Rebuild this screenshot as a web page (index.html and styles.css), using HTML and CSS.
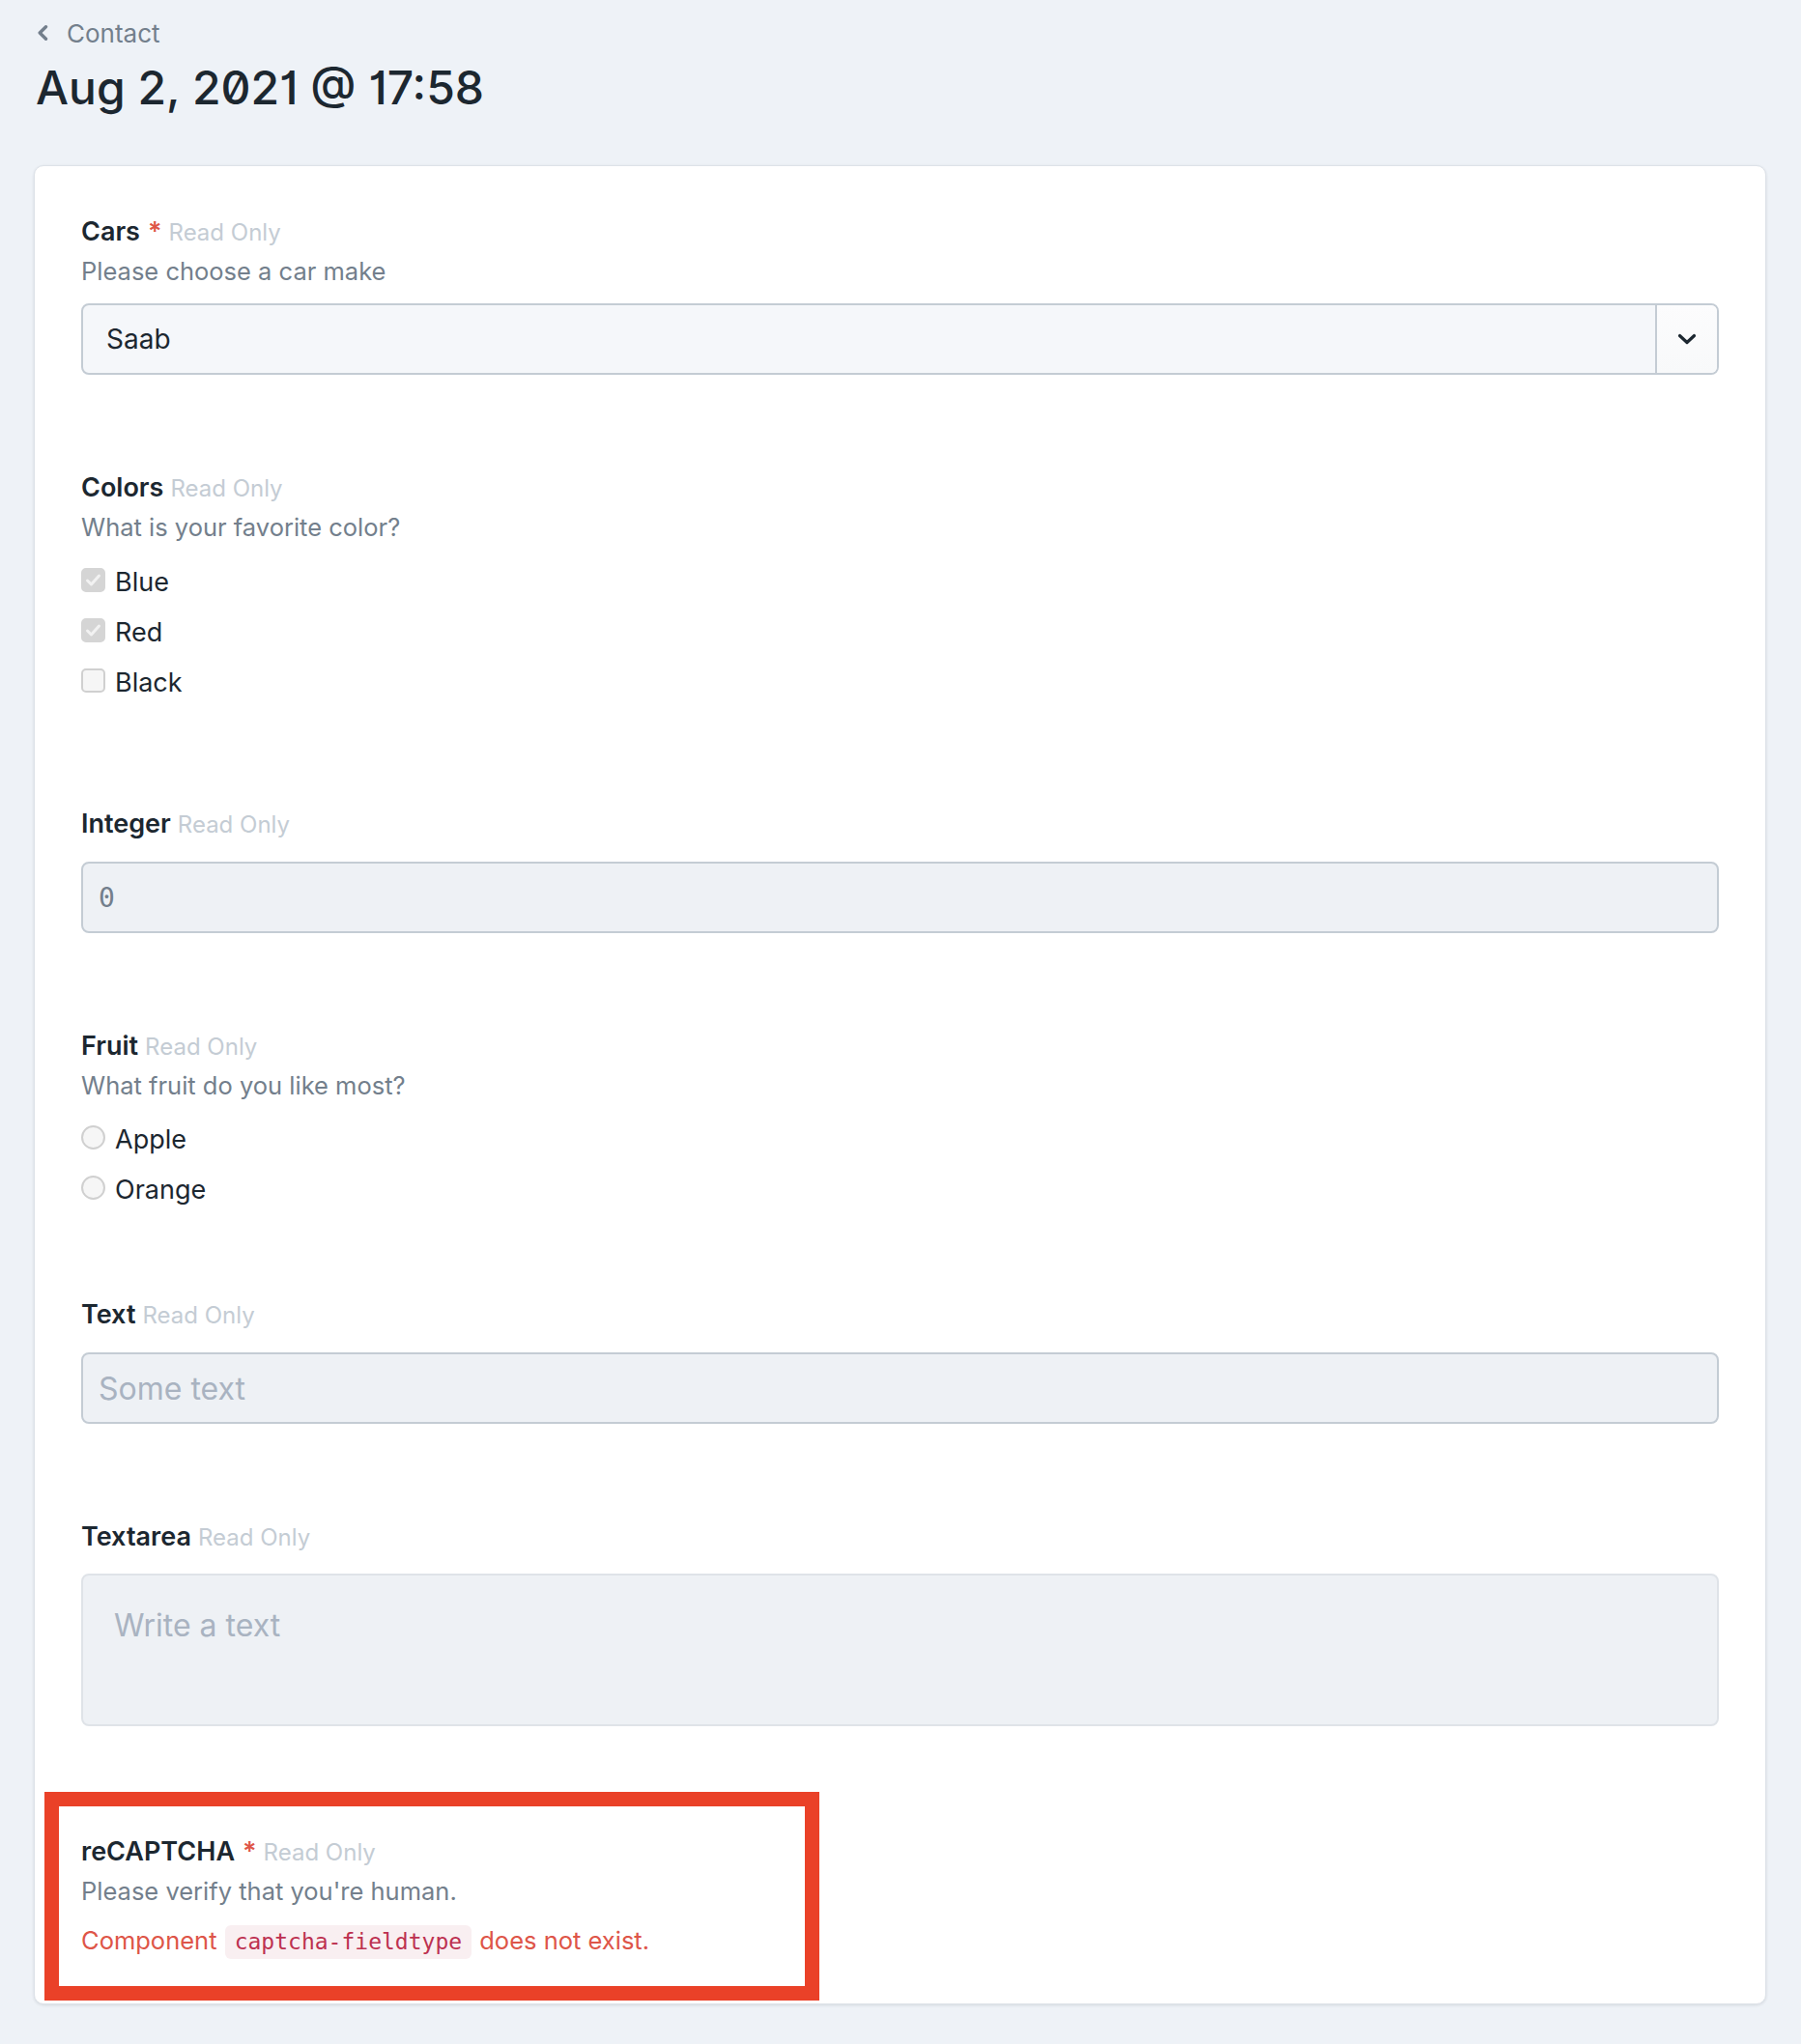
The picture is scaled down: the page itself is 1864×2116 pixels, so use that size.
FILE: index.html
```html
<!DOCTYPE html>
<html lang="en">
<head>
<meta charset="utf-8">
<title>Aug 2, 2021 @ 17:58</title>
<link rel="stylesheet" href="styles.css">
</head>
<body>
<div class="page">
  <a class="crumb" href="#">
    <svg class="crumb-icon" viewBox="0 0 12 16" aria-hidden="true"><path d="M9.5 1.8 L3.2 8 L9.5 14.2"/></svg>
    <span>Contact</span>
  </a>
  <h1 class="title">Aug 2, 2021 @ 17:58</h1>

  <div class="card">
    <div class="field">
      <div class="label">Cars<span class="req">*</span><span class="ro">Read Only</span></div>
      <div class="desc">Please choose a car make</div>
      <div class="select">
        <div class="select-value">Saab</div>
        <div class="select-btn">
          <svg class="select-icon" viewBox="0 0 20 12" aria-hidden="true"><path d="M2.5 2.5 L10 9.5 L17.5 2.5"/></svg>
        </div>
      </div>
    </div>

    <div class="field">
      <div class="label">Colors<span class="ro">Read Only</span></div>
      <div class="desc">What is your favorite color?</div>
      <div class="options checks">
        <div class="option"><span class="cb checked"><svg viewBox="0 0 25 25"><path d="M6.5 13 L10.5 17 L18.5 8"/></svg></span><span>Blue</span></div>
        <div class="option"><span class="cb checked"><svg viewBox="0 0 25 25"><path d="M6.5 13 L10.5 17 L18.5 8"/></svg></span><span>Red</span></div>
        <div class="option"><span class="cb"></span><span>Black</span></div>
      </div>
    </div>

    <div class="field">
      <div class="label">Integer<span class="ro">Read Only</span></div>
      <div class="input"><span class="mono-value">0</span></div>
    </div>

    <div class="field">
      <div class="label">Fruit<span class="ro">Read Only</span></div>
      <div class="desc">What fruit do you like most?</div>
      <div class="options radios">
        <div class="option"><span class="rd"></span><span>Apple</span></div>
        <div class="option"><span class="rd"></span><span>Orange</span></div>
      </div>
    </div>

    <div class="field">
      <div class="label">Text<span class="ro">Read Only</span></div>
      <div class="input"><span class="placeholder">Some text</span></div>
    </div>

    <div class="field">
      <div class="label">Textarea<span class="ro">Read Only</span></div>
      <div class="textarea">Write a text</div>
    </div>

    <div class="field last">
      <div class="label">reCAPTCHA<span class="req">*</span><span class="ro">Read Only</span></div>
      <div class="desc">Please verify that you're human.</div>
      <div class="error">Component <code class="code">captcha-fieldtype</code> does not exist.</div>
      <div class="highlight"></div>
    </div>
  </div>
</div>
</body>
</html>
```

FILE: styles.css
```css
* {
  box-sizing: border-box;
}

html,
body {
  margin: 0;
  background: #eef2f7;
}

body {
  font-family: Inter, "Noto Sans", "Liberation Sans", sans-serif;
  color: #1c2730;
}

.page {
  padding: 14px 36px 40px 35px;
}

.crumb {
  display: flex;
  align-items: center;
  height: 40px;
  font-size: 26px;
  color: #737f8c;
  text-decoration: none;
}

.crumb-icon {
  width: 12px;
  height: 16px;
  margin-left: 3px;
  margin-right: 19px;
  fill: none;
  stroke: #737f8c;
  stroke-width: 3.4;
  stroke-linecap: round;
  stroke-linejoin: round;
}

.title {
  margin: 5px 0 0 2px;
  font-size: 48px;
  line-height: 64px;
  font-weight: 500;
  color: #1c2730;
  font-feature-settings: "zero" 1, "cv01" 1;
}

.card {
  margin-top: 48px;
  background: #fff;
  border: 1px solid #dde2e8;
  border-radius: 10px;
  box-shadow: 0 1px 3px rgba(30, 45, 60, 0.12);
}

.field {
  position: relative;
  padding: 48px 48px 49px;
}

.field.last {
  padding-bottom: 45px;
}

.label {
  font-size: 27px;
  line-height: 40px;
  font-weight: 600;
  color: #1c2730;
}

.req {
  color: #de5548;
  margin-left: 8px;
}

.ro {
  margin-left: 7px;
  font-size: 24px;
  font-weight: 400;
  color: #c4ccd4;
}

.desc {
  font-size: 25.5px;
  line-height: 40px;
  color: #737f8c;
}

.select {
  display: flex;
  margin-top: 13px;
  height: 74px;
  border: 2px solid #c4ccd4;
  border-radius: 8px;
  background: #f5f7fa;
  overflow: hidden;
}

.select-value {
  flex: 1;
  display: flex;
  align-items: center;
  padding-left: 24px;
  font-size: 28px;
  color: #1c2730;
}

.select-btn {
  width: 64px;
  display: flex;
  align-items: center;
  justify-content: center;
  border-left: 2px solid #c4ccd4;
  background: linear-gradient(#fcfcfd, #f8f9fa);
}

.select-icon {
  width: 20px;
  height: 12px;
  fill: none;
  stroke: #1c2730;
  stroke-width: 3.2;
  stroke-linecap: round;
  stroke-linejoin: round;
}

.options {
  display: flex;
  flex-direction: column;
  gap: 12px;
}

.options.checks {
  margin-top: 16px;
  margin-bottom: 10px;
}

.options.radios {
  margin-top: 15px;
  margin-bottom: -7px;
}

.option {
  display: flex;
  align-items: center;
  gap: 10px;
  height: 40px;
  font-size: 27px;
  color: #1c2730;
}

.cb,
.rd {
  flex: none;
  width: 25px;
  height: 25px;
  margin-top: -3px;
  background: #f6f6f6;
  border: 2px solid #d0d0d0;
}

.cb {
  border-radius: 5px;
}

.cb.checked {
  background: #d5d5d5;
  border-color: #d5d5d5;
  display: flex;
}

.cb svg {
  width: 25px;
  height: 25px;
  margin: -2px;
  fill: none;
  stroke: #f2f2f2;
  stroke-width: 3;
  stroke-linecap: round;
  stroke-linejoin: round;
}

.rd {
  border-radius: 50%;
}

.input {
  display: flex;
  align-items: center;
  margin-top: 18px;
  height: 74px;
  padding-left: 16px;
  border: 2px solid #c4ccd4;
  border-radius: 8px;
  background: #eef1f5;
}

.mono-value {
  font-family: "DejaVu Sans Mono", "Liberation Mono", monospace;
  font-size: 28px;
  color: #737f8c;
}

.placeholder {
  font-size: 32px;
  color: #a9b3c1;
}

.textarea {
  margin-top: 17px;
  margin-bottom: 13px;
  height: 158px;
  padding: 28px 32px;
  border: 2px solid #dfe3e8;
  border-radius: 8px;
  background: #eef1f5;
  font-size: 32px;
  line-height: 48px;
  color: #a9b3c1;
}

.error {
  margin-top: 11px;
  font-size: 25.5px;
  line-height: 40px;
  color: #de5548;
}

.code {
  display: inline-block;
  margin: 0 1px;
  padding: 3px 10px;
  line-height: 29px;
  border-radius: 6px;
  background: #f9eff1;
  color: #bd3150;
  font-family: "DejaVu Sans Mono", "Liberation Mono", monospace;
  font-size: 23px;
}

.highlight {
  position: absolute;
  top: 6px;
  left: 10px;
  width: 802px;
  height: 216px;
  border: 15px solid #ea4128;
  pointer-events: none;
}
```
